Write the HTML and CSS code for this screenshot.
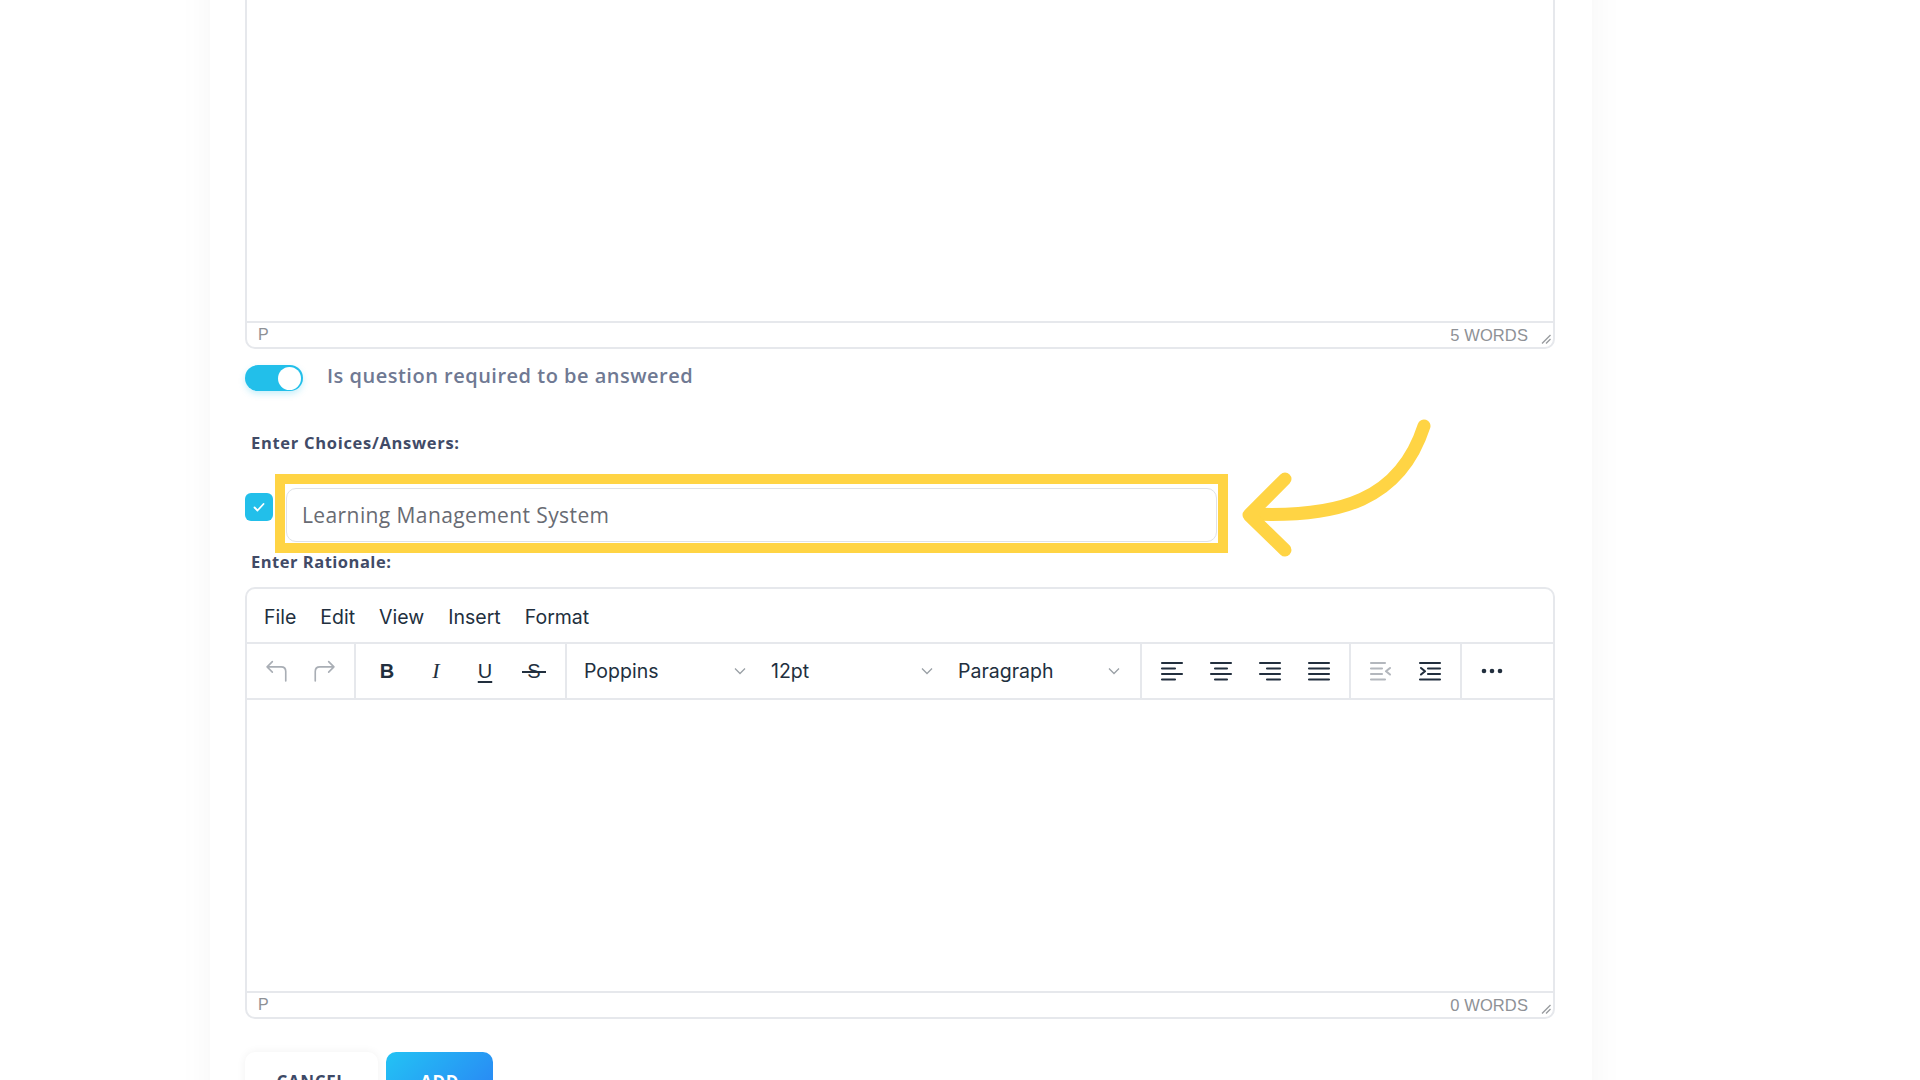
FILE: index.html
```html
<!DOCTYPE html>
<html lang="en">
<head>
<meta charset="utf-8">
<title>Question editor</title>
<link rel="stylesheet" href="styles.css">
</head>
<body>
<div class="page">
  <div class="card">
    <div class="editor editor-top">
      <div class="editor-body body-top"></div>
      <div class="statusbar">
        <span class="path">P</span>
        <span class="words">5 WORDS</span>
        <svg class="resize" width="10" height="10" viewBox="0 0 10 10"><path d="M1 9.5 L9.5 1 M5 9.5 L9.5 5" /></svg>
      </div>
    </div>

    <div class="toggle-row">
      <span class="toggle"><span class="knob"></span></span>
      <span class="toggle-label">Is question required to be answered</span>
    </div>

    <div class="field-label label-choices">Enter Choices/Answers:</div>

    <div class="choice-row">
      <span class="checkbox">
        <svg width="28" height="28" viewBox="0 0 28 28"><path d="M9.5 14.5 L12.5 17.5 L18.5 11" /></svg>
      </span>
      <div class="choice-input">Learning Management System</div>
    </div>

    <div class="field-label label-rationale">Enter Rationale:</div>

    <div class="editor editor-main">
      <div class="menubar">
        <span class="menu-item">File</span>
        <span class="menu-item">Edit</span>
        <span class="menu-item">View</span>
        <span class="menu-item">Insert</span>
        <span class="menu-item">Format</span>
      </div>
      <div class="toolbar">
        <div class="tb-group tb-history">
          <span class="tb-btn disabled">
            <svg width="28" height="28" viewBox="0 0 24 24" class="stroke-ico"><path d="M8 4 L3.5 8.5 L8 13 M3.5 8.5 H15.5 Q19.5 8.5 19.5 12.5 V20.5" /></svg>
          </span>
          <span class="tb-btn disabled">
            <svg width="28" height="28" viewBox="0 0 24 24" class="stroke-ico"><path d="M16 4 L20.5 8.5 L16 13 M20.5 8.5 H8.5 Q4.5 8.5 4.5 12.5 V20.5" /></svg>
          </span>
        </div>
        <div class="tb-group tb-format">
          <span class="tb-btn"><span class="ico-b">B</span></span>
          <span class="tb-btn"><span class="ico-i">I</span></span>
          <span class="tb-btn"><span class="ico-u">U</span></span>
          <span class="tb-btn"><span class="ico-s">S</span></span>
        </div>
        <div class="tb-group tb-selects">
          <span class="tb-select"><span>Poppins</span><svg class="chev" width="12" height="8" viewBox="0 0 12 8"><path d="M1 1.5 L6 6.5 L11 1.5" /></svg></span>
          <span class="tb-select"><span>12pt</span><svg class="chev" width="12" height="8" viewBox="0 0 12 8"><path d="M1 1.5 L6 6.5 L11 1.5" /></svg></span>
          <span class="tb-select"><span>Paragraph</span><svg class="chev" width="12" height="8" viewBox="0 0 12 8"><path d="M1 1.5 L6 6.5 L11 1.5" /></svg></span>
        </div>
        <div class="tb-group tb-align">
          <span class="tb-btn"><svg class="lines" width="24" height="20" viewBox="0 0 24 20"><path d="M2 2 H22 M2 7.5 H15 M2 13 H22 M2 18.5 H15" /></svg></span>
          <span class="tb-btn"><svg class="lines" width="24" height="20" viewBox="0 0 24 20"><path d="M2 2 H22 M6 7.5 H18 M2 13 H22 M6 18.5 H18" /></svg></span>
          <span class="tb-btn"><svg class="lines" width="24" height="20" viewBox="0 0 24 20"><path d="M2 2 H22 M9 7.5 H22 M2 13 H22 M9 18.5 H22" /></svg></span>
          <span class="tb-btn"><svg class="lines" width="24" height="20" viewBox="0 0 24 20"><path d="M2 2 H22 M2 7.5 H22 M2 13 H22 M2 18.5 H22" /></svg></span>
        </div>
        <div class="tb-group tb-indent">
          <span class="tb-btn disabled"><svg class="lines" width="24" height="20" viewBox="0 0 24 20"><path d="M2 2 H16 M2 7.5 H13 M2 13 H13 M2 18.5 H16 M21 7 L17 10.25 L21 13.5" /></svg></span>
          <span class="tb-btn"><svg class="lines" width="24" height="20" viewBox="0 0 24 20"><path d="M2 2 H22 M10 7.5 H22 M10 13 H22 M2 18.5 H22 M3 7 L7 10.25 L3 13.5" /></svg></span>
        </div>
        <div class="tb-group tb-more">
          <span class="tb-btn"><svg width="24" height="8" viewBox="0 0 24 8"><circle cx="4" cy="4" r="2.3" /><circle cx="12" cy="4" r="2.3" /><circle cx="20" cy="4" r="2.3" /></svg></span>
        </div>
      </div>
      <div class="editor-body body-main"></div>
      <div class="statusbar">
        <span class="path">P</span>
        <span class="words">0 WORDS</span>
        <svg class="resize" width="10" height="10" viewBox="0 0 10 10"><path d="M1 9.5 L9.5 1 M5 9.5 L9.5 5" /></svg>
      </div>
    </div>

    <div class="actions">
      <button class="btn btn-cancel">CANCEL</button>
      <button class="btn btn-add">ADD</button>
    </div>
  </div>

  <div class="highlight"></div>
  <svg class="callout-arrow" width="220" height="170" viewBox="1225 405 220 170">
    <path d="M1424 426 C1400 500 1340 518 1251 514" />
    <path d="M1285 479 L1249 515 L1285 550" />
  </svg>
</div>
</body>
</html>
```

FILE: styles.css
```css
* { box-sizing: border-box; }

html, body {
  margin: 0;
  padding: 0;
  background: #ffffff;
}

body {
  font-family: "Open Sans", "Noto Sans", sans-serif;
}

.page {
  position: relative;
  width: 1920px;
  height: 1080px;
  overflow: hidden;
  background: #ffffff;
}

.card {
  margin: -40px 0 0 210px;
  width: 1382px;
  padding: 20px 37px 60px 35px;
  background: #ffffff;
  box-shadow: 0 0 34px rgba(0, 0, 0, 0.045);
}

/* ---------- editors ---------- */
.editor {
  border: 2px solid #e6e8ec;
  border-radius: 10px;
  background: #fff;
  font-family: Inter, "Liberation Sans", sans-serif;
  color: #222f3e;
}

.editor-body { background: #fff; }
.body-top { height: 339px; }
.body-main { height: 291px; }

.statusbar {
  height: 26px;
  border-top: 2px solid #e6e8ec;
  display: flex;
  align-items: center;
  padding: 0 2px 0 11px;
  font-family: "Liberation Sans", Arial, sans-serif;
  font-size: 16px;
  color: #8e9196;
}

.statusbar .path { flex: 1; }
.statusbar .words { font-size: 16.5px; letter-spacing: 0.1px; }

.resize {
  margin: 8px 0 0 13px;
  align-self: center;
}
.resize path { stroke: #9a9ca0; stroke-width: 1.4; fill: none; }

/* ---------- toggle ---------- */
.toggle-row {
  margin-top: 16px;
  display: flex;
  align-items: center;
  gap: 24px;
  height: 26px;
}

.toggle {
  width: 58px;
  height: 26px;
  border-radius: 13px;
  background: #22bfea;
  display: flex;
  align-items: center;
  justify-content: flex-end;
  padding-right: 2px;
  box-shadow: 0 3px 6px rgba(34, 191, 234, 0.25);
}

.knob {
  width: 23px;
  height: 23px;
  border-radius: 50%;
  background: #ffffff;
}

.toggle-label {
  font-size: 20px;
  line-height: 26px;
  padding-bottom: 4px;
  font-weight: 600;
  letter-spacing: 0.5px;
  color: #6f7993;
}

/* ---------- labels ---------- */
.field-label {
  font-size: 16.5px;
  line-height: 24px;
  font-weight: 700;
  letter-spacing: 0.7px;
  color: #414b67;
  padding-left: 6px;
}
.label-choices { margin-top: 40px; }
.label-rationale { margin-top: 8px; letter-spacing: 0.5px; }

/* ---------- choice ---------- */
.choice-row {
  margin-top: 33px;
  display: flex;
  align-items: flex-start;
  gap: 13px;
}

.checkbox {
  margin-top: 5px;
  width: 28px;
  height: 28px;
  border-radius: 6px;
  background: #22bfea;
  display: flex;
}
.checkbox path { stroke: #ffffff; stroke-width: 1.8; fill: none; stroke-linecap: round; stroke-linejoin: round; }

.choice-input {
  width: 931px;
  height: 54px;
  border: 1.5px solid #dfe2e6;
  border-radius: 10px;
  padding-left: 15px;
  display: flex;
  align-items: center;
  font-size: 21px;
  letter-spacing: 0.4px;
  color: #686b73;
  background: #fff;
}

.editor-main { margin-top: 13px; }

/* ---------- menubar ---------- */
.menubar {
  height: 55px;
  border-bottom: 2px solid #e6e8ec;
  display: flex;
  align-items: center;
  gap: 24px;
  padding: 2px 0 0 17px;
  font-size: 19.5px;
  color: #222f3e;
}

/* ---------- toolbar ---------- */
.toolbar {
  height: 56px;
  border-bottom: 2px solid #e6e8ec;
  display: flex;
  align-items: stretch;
}

.tb-group {
  display: flex;
  align-items: center;
  border-right: 2px solid #e6e8ec;
  padding: 0 8px;
  gap: 5px;
}
.tb-history { gap: 3px; }
.tb-format { padding: 0 9px; }
.tb-selects { padding: 0 12px 0 4px; gap: 4px; }
.tb-more { border-right: none; }

.tb-btn {
  width: 44px;
  height: 40px;
  display: flex;
  align-items: center;
  justify-content: center;
  color: #222f3e;
}

.stroke-ico path { stroke: #222f3e; stroke-width: 1.4; fill: none; stroke-linecap: round; stroke-linejoin: round; }
.lines path { stroke: #222f3e; stroke-width: 2.1; fill: none; stroke-linecap: round; stroke-linejoin: round; }
.tb-btn circle { fill: #222f3e; }

.tb-btn.disabled .stroke-ico path { stroke: #a9aeb5; }
.tb-btn.disabled .lines path { stroke: #b3b7bd; }

.ico-b {
  font-family: "Liberation Sans", Arial, sans-serif;
  font-weight: 700;
  font-size: 20px;
}
.ico-i {
  font-family: "Liberation Serif", "Times New Roman", serif;
  font-style: italic;
  font-size: 22px;
}
.ico-u {
  font-family: "Liberation Sans", Arial, sans-serif;
  font-size: 20px;
  text-decoration: underline;
  text-decoration-thickness: 1.5px;
  text-underline-offset: 3px;
}
.ico-s {
  position: relative;
  font-family: "Liberation Sans", Arial, sans-serif;
  font-size: 20px;
  padding: 0 5px;
}
.ico-s::after {
  content: "";
  position: absolute;
  left: 0;
  right: 0;
  top: 50%;
  height: 1.6px;
  background: #222f3e;
}

.tb-select {
  width: 183px;
  height: 40px;
  display: flex;
  align-items: center;
  justify-content: space-between;
  padding: 0 8px 0 13px;
  font-size: 19.5px;
  color: #222f3e;
}
.chev path { stroke: #9aa0a6; stroke-width: 1.3; fill: none; }

/* ---------- buttons ---------- */
.actions {
  margin-top: 33px;
  display: flex;
  gap: 8px;
}

.btn {
  height: 58px;
  border: none;
  border-radius: 10px;
  font-family: "Open Sans", sans-serif;
  font-size: 17px;
  font-weight: 700;
  letter-spacing: 0.6px;
}

.btn-cancel {
  width: 133px;
  background: #ffffff;
  color: #3d4966;
  box-shadow: 0 0 10px rgba(0, 0, 0, 0.06);
}

.btn-add {
  width: 107px;
  background: linear-gradient(135deg, #23c3f4 0%, #2a80f4 100%);
  color: #ffffff;
}

/* ---------- annotation overlay ---------- */
.highlight {
  position: absolute;
  left: 275px;
  top: 474px;
  width: 953px;
  height: 79px;
  border: 10px solid #ffd444;
  pointer-events: none;
}

.callout-arrow {
  position: absolute;
  left: 1225px;
  top: 405px;
  pointer-events: none;
}
.callout-arrow path {
  stroke: #ffd444;
  stroke-width: 13;
  fill: none;
  stroke-linecap: round;
  stroke-linejoin: round;
}
```
